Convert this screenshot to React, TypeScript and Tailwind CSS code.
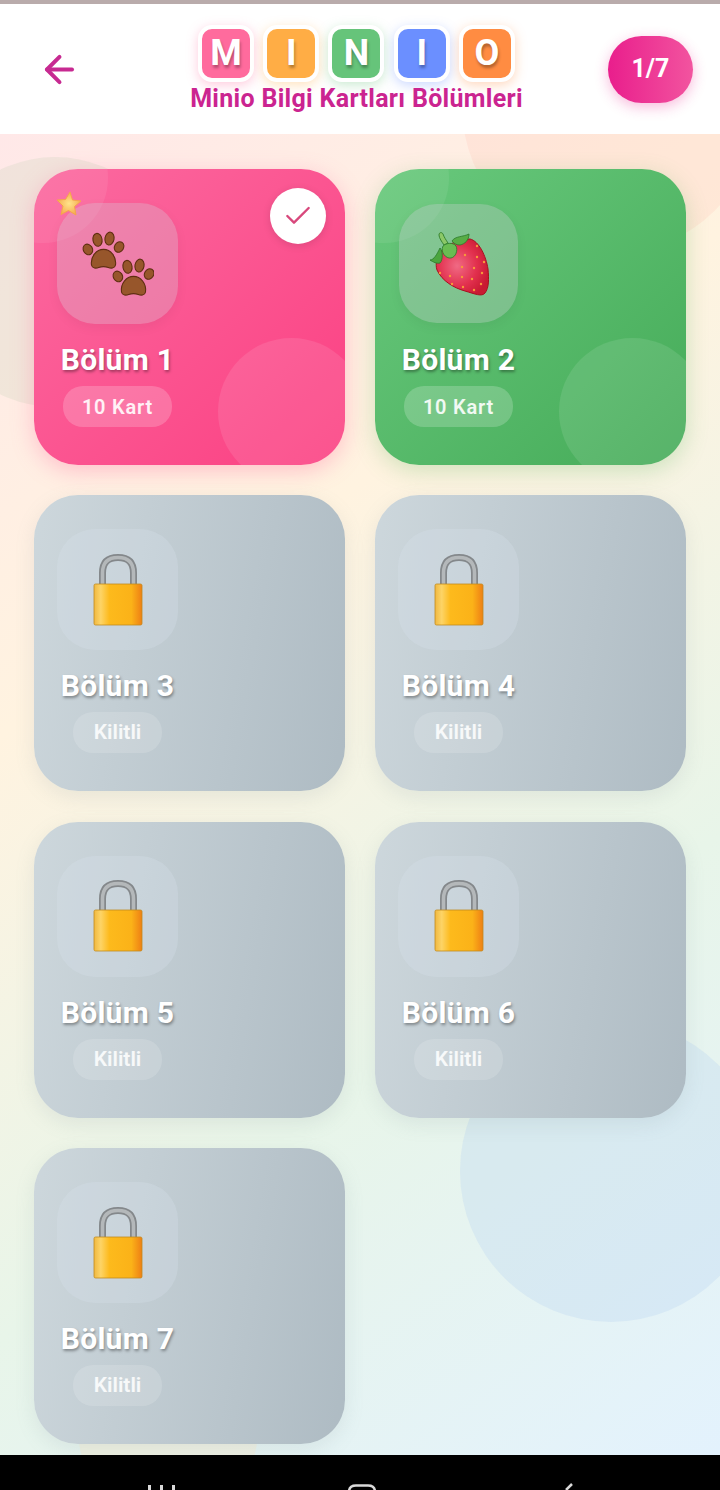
import { ArrowLeft, Check } from "lucide-react";
import type { ReactNode } from "react";

const LETTERS = [
  { ch: "M", bg: "bg-[#ff6b9d]", glow: "shadow-[0_3px_12px_rgba(255,107,157,0.35)]" },
  { ch: "I", bg: "bg-[#ffad45]", glow: "shadow-[0_3px_12px_rgba(255,173,69,0.35)]" },
  { ch: "N", bg: "bg-[#66c47a]", glow: "shadow-[0_3px_12px_rgba(102,196,122,0.35)]" },
  { ch: "I", bg: "bg-[#6b8fff]", glow: "shadow-[0_3px_12px_rgba(107,143,255,0.35)]" },
  { ch: "O", bg: "bg-[#ff8c42]", glow: "shadow-[0_3px_12px_rgba(255,140,66,0.35)]" },
];

function Paw({ x, y }: { x: number; y: number }) {
  return (
    <g transform={`translate(${x} ${y}) scale(1.2)`} fill="#97562b" stroke="#5e2e10" strokeWidth="0.9">
      <ellipse cx="-13" cy="-3" rx="3.8" ry="4.6" transform="rotate(-30 -13 -3)" />
      <ellipse cx="-5" cy="-11" rx="3.8" ry="5.4" transform="rotate(-10 -5 -11)" />
      <ellipse cx="5" cy="-12" rx="3.8" ry="5.4" transform="rotate(10 5 -12)" />
      <ellipse cx="13" cy="-5" rx="3.8" ry="4.6" transform="rotate(30 13 -5)" />
      <path d="M-10 10c-1-7 4-13 10-13s11 6 10 13c-.5 3-4 3-6 2-3-1-5-1-8 0-2 1-5.500 1-6-2z" />
    </g>
  );
}

function PawsIcon() {
  return (
    <svg width="72" height="68" viewBox="0 0 72 68">
      <Paw x={21.5} y={23} />
      <Paw x={51.5} y={50} />
    </svg>
  );
}

const SEEDS = [
  [36, 23], [48, 25], [55, 30], [33, 35], [45, 36], [53, 41], [11, 41], [21, 44],
  [33, 45], [43, 47], [52, 52], [23, 52], [34, 55], [45, 58], [48, 14],
];

function StrawberryIcon() {
  return (
    <svg width="60" height="64" viewBox="0 0 60 64">
      <defs>
        <radialGradient id="berry" cx="0.4" cy="0.48" r="0.62">
          <stop offset="0" stopColor="#f06a84" />
          <stop offset="0.6" stopColor="#e2304e" />
          <stop offset="1" stopColor="#c91a32" />
        </radialGradient>
      </defs>
      <path
        d="M11 21C16 13 30 7 41 7c9 2 16 17 18 30 1 10 1 19-3 24-3 4-10 1-20-2C25 56 13 49 8 38c-2-6 0-12 3-17z"
        fill="url(#berry)"
        stroke="#a8101f"
        strokeWidth="1"
      />
      <g fill="#f79a3a">
        {SEEDS.map(([cx, cy]) => (
          <circle key={`${cx}-${cy}`} cx={cx} cy={cy} r="1.200" />
        ))}
      </g>
      <path d="M10 3c0-3 3-3 4-1 1 3 3 6 5 9l-4 2c-2-3-5-7-5-10z" fill="#8cc868" stroke="#2f7d2a" strokeWidth="0.9" />
      <path d="M1 28c4 0 7-6 10-12 3 3 3 12 0 15-3 1-7-1-10-3z" fill="#4ba53e" stroke="#2a7a28" strokeWidth="0.8" />
      <path d="M23 9c3-5 11-4 17-7 0 6-4 10-9 11-3 0-6-1-8-4z" fill="#57ad45" stroke="#2a7a28" strokeWidth="0.8" />
      <path d="M14 14c3-3 10-4 13 0 2 4 0 11-5 12-5 1-11-6-8-12z" fill="#69bd52" stroke="#2a7a28" strokeWidth="0.8" />
    </svg>
  );
}

function LockIcon({ id }: { id: string }) {
  return (
    <svg width="50" height="72" viewBox="0 0 50 72">
      <defs>
        <linearGradient id={`body-${id}`} x1="0" x2="1" y1="0" y2="0">
          <stop offset="0" stopColor="#f0b840" />
          <stop offset="0.14" stopColor="#fdd466" />
          <stop offset="0.32" stopColor="#fdba1c" />
          <stop offset="0.78" stopColor="#fbb218" />
          <stop offset="1" stopColor="#ee7f14" />
        </linearGradient>
      </defs>
      <path d="M9.500 32V19C9.500 8 15 3.500 25 3.500S40.500 8 40.500 19v13" fill="none" stroke="#84888b" strokeWidth="7" />
      <path d="M9.500 32V19C9.500 8 15 3.500 25 3.500S40.500 8 40.500 19v13" fill="none" stroke="#b4b8ba" strokeWidth="3.500" />
      <rect x="1" y="30" width="48" height="41" rx="1.500" fill={`url(#body-${id})`} stroke="#c08a20" strokeWidth="0.8" />
    </svg>
  );
}

function Star() {
  return (
    <svg className="absolute left-[20px] top-[21px] z-10" width="28" height="28" viewBox="0 0 28 28">
      <defs>
        <radialGradient id="star" cx="0.5" cy="0.5" r="0.55">
          <stop offset="0" stopColor="#ffe48a" />
          <stop offset="1" stopColor="#f5a64c" />
        </radialGradient>
      </defs>
      <path
        d="M16 2l2.500 8 8.500 1-6.500 5.500 1.500 8.500-7.500-4.500-7.500 4 2-8.500L3 10l8.500-.500z"
        fill="url(#star)"
        stroke="#f5a64c"
        strokeWidth="1"
        strokeLinejoin="round"
      />
    </svg>
  );
}

const TITLE_SHADOW = "[text-shadow:1px_2px_3px_rgba(0,0,0,0.36)]";

function OpenCard({ title, tone, done, icon }: { title: string; tone: "pink" | "green"; done?: boolean; icon: ReactNode }) {
  const pink = tone === "pink";
  return (
    <div
      className={`relative h-[296px] rounded-[44px] ${
        pink
          ? "bg-[linear-gradient(135deg,#fb6aa0,#fb4082)] shadow-[0_6px_22px_rgba(255,107,157,0.35)]"
          : "bg-[linear-gradient(135deg,#69c97d,#45ab58)] shadow-[0_6px_22px_rgba(76,175,80,0.25)]"
      }`}
    >
      <div className="absolute inset-0 overflow-hidden rounded-[44px]">
        <div className="absolute left-[-56px] top-[-56px] h-[130px] w-[130px] rounded-full bg-white/[0.07]" />
        <div className="absolute right-[-20px] bottom-[-20px] h-[147px] w-[147px] rounded-full bg-white/10" />
      </div>
      {pink && <Star />}
      {done && (
        <div className="absolute right-[19px] top-[19px] flex h-[56px] w-[56px] items-center justify-center rounded-full bg-white shadow-[0_2px_8px_rgba(0,0,0,0.12)]">
          <Check size={32} strokeWidth={1.8} className="text-[#d8487c]" />
        </div>
      )}
      <div className="relative ml-[23px] flex w-[121px] flex-col items-center pt-[34px]">
        <div
          className={`flex items-center justify-center rounded-[38px] bg-[#cfcdd6]/30 shadow-[0_4px_12px_rgba(0,0,0,0.05)] ${
            pink ? "h-[121px] w-[121px]" : "my-[1px] h-[119px] w-[119px]"
          }`}
        >
          {icon}
        </div>
        <div className={`mt-[17px] text-[30px] font-bold leading-[38px] tracking-[0.3px] whitespace-nowrap text-white ${TITLE_SHADOW}`}>
          {title}
        </div>
        <div className="mt-[7px] flex h-[41px] w-[109px] items-center justify-center rounded-[20px] bg-white/20 text-[20px] font-semibold tracking-[0.8px] text-white/90">
          10 Kart
        </div>
      </div>
    </div>
  );
}

function LockedCard({ n }: { n: number }) {
  return (
    <div className="h-[296px] rounded-[44px] bg-[linear-gradient(100deg,#cdd7dc,#aebbc3)] shadow-[0_6px_20px_rgba(120,140,150,0.14)]">
      <div className="ml-[23px] flex w-[121px] flex-col items-center pt-[34px]">
        <div className="flex h-[121px] w-[121px] items-center justify-center rounded-[38px] bg-[#d8e2ea]/30">
          <LockIcon id={String(n)} />
        </div>
        <div className={`mt-[17px] text-[30px] font-bold leading-[38px] tracking-[0.3px] whitespace-nowrap text-white ${TITLE_SHADOW}`}>
          Bölüm {n}
        </div>
        <div className="mt-[7px] flex h-[41px] w-[89px] items-center justify-center rounded-[20px] bg-white/15 text-[21px] font-semibold text-white/85">
          Kilitli
        </div>
      </div>
    </div>
  );
}

export default function App() {
  return (
    <div className="relative flex h-[1490px] w-[720px] flex-col overflow-hidden bg-black font-['Roboto',sans-serif]">
      <div className="h-[4px] bg-[#b9abab]" />
      {/* Header */}
      <header className="relative z-10 flex h-[130px] items-center justify-between bg-white pl-[38px] pr-[27px]">
        <ArrowLeft size={43} strokeWidth={2.2} className="text-[#c72a91]" />
        <div className="flex flex-col items-center pl-[24px]">
          <div className="flex gap-[9.250px]">
            {LETTERS.map((l, i) => (
              <div
                key={i}
                className={`box-content flex h-[49px] w-[48px] items-center justify-center rounded-[14px] border-[4px] border-white text-[36px] font-bold text-white [text-shadow:1px_3px_3px_rgba(0,0,0,0.3)] ${l.bg} ${l.glow}`}
              >
                {l.ch}
              </div>
            ))}
          </div>
          <div className="mt-[2px] text-[25px] font-bold leading-[30px] tracking-[0.3px] whitespace-nowrap text-[#cb2490]">
            Minio Bilgi Kartları Bölümleri
          </div>
        </div>
        <div className="flex h-[67px] w-[85px] items-center justify-center rounded-[34px] bg-[linear-gradient(90deg,#e91e8c,#f2549f)] text-[25px] font-bold text-white shadow-[0_4px_14px_rgba(233,30,140,0.3)]">
          1/7
        </div>
      </header>

      {/* Bölümler */}
      <main className="relative h-[1321px] overflow-hidden bg-[linear-gradient(145deg,#ffe8e8_0%,#fff3e0_33%,#e8f5e9_66%,#e3f2fd_100%)]">
        <div className="absolute left-[462px] top-[-176px] h-[296px] w-[296px] rounded-full bg-[#ff9a8a]/12" />
        <div className="absolute left-[-70px] top-[23px] h-[250px] w-[250px] rounded-full bg-[#b8ccb0]/20" />
        <div className="absolute left-[460px] top-[886px] h-[302px] w-[302px] rounded-full bg-[#bcd7f2]/35" />
        <div className="absolute left-[78px] top-[1206px] h-[180px] w-[180px] rounded-full bg-[#fde8c8]/35" />
        <div className="relative grid grid-cols-2 gap-x-[30px] gap-y-[30.400px] px-[34px] pt-[35px]">
          <OpenCard title="Bölüm 1" tone="pink" done icon={<PawsIcon />} />
          <OpenCard title="Bölüm 2" tone="green" icon={<StrawberryIcon />} />
          {[3, 4, 5, 6, 7].map((n) => (
            <LockedCard key={n} n={n} />
          ))}
        </div>
      </main>

      {/* Android nav bar, cut off at the bottom of the capture */}
      <div className="flex flex-1 items-start justify-center bg-black">
        <svg width="720" height="35" viewBox="0 0 720 35">
          <g fill="#d9d9d9">
            <rect x="148" y="30" width="3" height="5" />
            <rect x="160" y="30" width="3" height="5" />
            <rect x="172" y="30" width="3" height="5" />
          </g>
          <path d="M349 37c0-5 3-6.500 7-6.500h12c4 0 7 1.500 7 6.500" fill="none" stroke="#d9d9d9" strokeWidth="2.500" />
          <path d="M572 29l-6 6" fill="none" stroke="#d9d9d9" strokeWidth="2.500" />
        </svg>
      </div>
    </div>
  );
}
